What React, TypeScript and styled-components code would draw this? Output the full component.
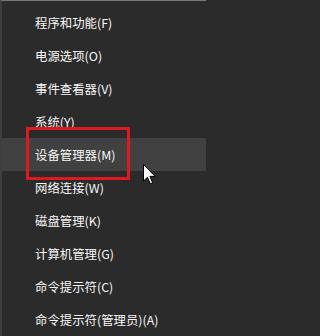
import React from "react";
import styled, { createGlobalStyle } from "styled-components";

const Global = createGlobalStyle`
  html, body { margin: 0; padding: 0; background: #2b2b2b; }
  #root { width: 206px; height: 336px; overflow: hidden; }
`;

const Menu = styled.div`
  position: relative;
  width: 206px;
  height: 336px;
  box-sizing: border-box;
  background: #2b2b2b;
  border-top: 1px solid #7a7a7a;
  border-left: 2px solid #3e3e3e;
  padding-top: 5px;
  display: flex;
  flex-direction: column;
  font-family: "Noto Sans CJK SC", "Microsoft YaHei", sans-serif;
`;

const Item = styled.div<{ $hover?: boolean }>`
  height: 33px;
  display: flex;
  align-items: center;
  padding-left: 33px;
  font-size: 12.4px;
  color: #f7f7f7;
  background: ${(p) => (p.$hover ? "#414141" : "transparent")};
  white-space: nowrap;
`;

const Highlight = styled.div`
  position: absolute;
  left: 24px;
  top: 126px;
  width: 104px;
  height: 53px;
  box-sizing: border-box;
  border: 3px solid #dd1a1f;
  pointer-events: none;
`;

const Cursor = styled.svg`
  position: absolute;
  left: 141px;
  top: 163px;
  width: 13px;
  height: 21px;
`;

const items = [
  "程序和功能(F)",
  "电源选项(O)",
  "事件查看器(V)",
  "系统(Y)",
  "设备管理器(M)",
  "网络连接(W)",
  "磁盘管理(K)",
  "计算机管理(G)",
  "命令提示符(C)",
  "命令提示符(管理员)(A)",
];

export default function App() {
  return (
    <>
      <Global />
      <Menu>
        {items.map((t, i) => (
          <Item key={t} $hover={i === 4}>
            {t}
          </Item>
        ))}
        <Highlight />
        <Cursor viewBox="0 0 13 21">
          <path
            d="M0.5 0.5 L0.5 17 L4.5 13.2 L7.3 19.8 L9.6 18.8 L6.9 12.4 L12.2 12.4 Z"
            fill="#ffffff"
            stroke="#000000"
            strokeWidth="1"
            strokeLinejoin="miter"
          />
        </Cursor>
      </Menu>
    </>
  );
}
